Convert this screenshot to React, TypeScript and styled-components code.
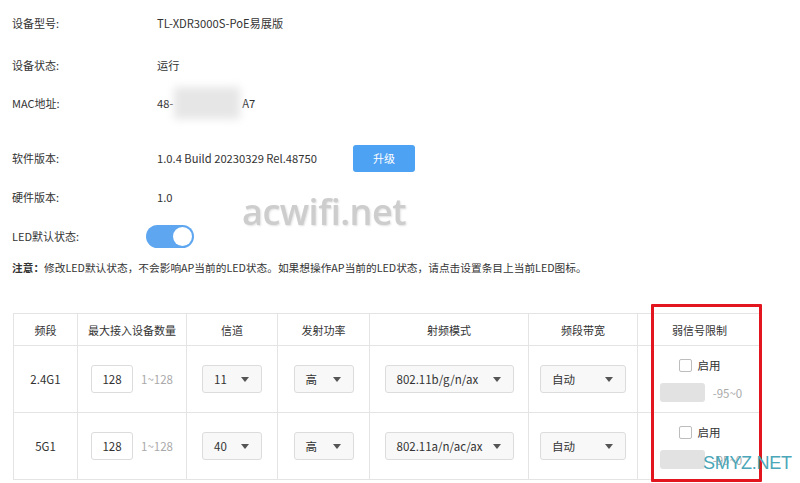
import React from 'react';
import styled, { createGlobalStyle } from 'styled-components';

const GlobalStyle = createGlobalStyle`
  html, body {
    margin: 0;
    padding: 0;
    background: #ffffff;
  }
  body {
    font-family: "Noto Sans CJK SC", "Noto Sans", "Liberation Sans", sans-serif;
    font-size: 11px;
    color: #333;
  }
`;

const Page = styled.div`
  position: relative;
  width: 800px;
  height: 483px;
  overflow: hidden;
  padding: 11px 0 0 12px;
  box-sizing: border-box;
`;

const InfoRow = styled.div<{ $gap: number }>`
  display: flex;
  align-items: center;
  height: 24px;
  margin-top: ${(p) => p.$gap}px;
`;

const Label = styled.div<{ $w?: number }>`
  width: ${(p) => p.$w ?? 145}px;
  flex-shrink: 0;
  color: #333;
  font-size: 11px;
`;

const Value = styled.div`
  color: #333;
  display: flex;
  align-items: center;
  font-size: 11.2px;
`;

const VersionText = styled.span`
  width: 196px;
  flex-shrink: 0;
`;

const Blurred = styled.span`
  display: inline-block;
  width: 66px;
  height: 32px;
  margin: 0 2px 0 1px;
  background: #e6e6e6;
  filter: blur(4px);
`;

const UpgradeButton = styled.button`
  width: 62px;
  height: 27px;
  border: none;
  border-radius: 3px;
  background: #4ea2f3;
  color: #fff;
  font-family: inherit;
  font-size: 11px;
  padding: 0;
`;

const Toggle = styled.div<{ $on: boolean }>`
  width: 48px;
  height: 23px;
  border-radius: 12px;
  background: ${(p) => (p.$on ? '#5ea6f0' : '#ccc')};
  display: flex;
  align-items: center;
  justify-content: ${(p) => (p.$on ? 'flex-end' : 'flex-start')};
  padding: 0 2px;
  box-sizing: border-box;
`;

const Knob = styled.div`
  width: 19px;
  height: 19px;
  border-radius: 50%;
  background: #fff;
`;

const Note = styled.div`
  margin-top: 12px;
  font-size: 10.7px;
  color: #333;
  white-space: nowrap;
`;

const NoteStrong = styled.span`
  font-weight: 700;
`;

const Table = styled.table`
  margin-top: 38px;
  margin-left: 1px;
  border-collapse: collapse;
  table-layout: fixed;
  width: 748px;
`;

const Col = styled.col<{ $w: number }>`
  width: ${(p) => p.$w}px;
`;

const Th = styled.th`
  height: 31px;
  border: 1px solid #e4e4e4;
  font-weight: 400;
  color: #333;
  font-size: 11px;
  text-align: center;
  padding: 0;
`;

const Td = styled.td`
  height: 66px;
  border: 1px solid #e4e4e4;
  text-align: center;
  padding: 0;
  color: #333;
  font-size: 11.5px;
`;

const CellInner = styled.div`
  display: flex;
  align-items: center;
  justify-content: center;
  gap: 8px;
`;

const NumInput = styled.div`
  width: 40px;
  height: 26px;
  border: 1px solid #dcdcdc;
  border-radius: 3px;
  display: flex;
  align-items: center;
  justify-content: center;
  color: #333;
`;

const Hint = styled.span`
  color: #aaa;
  font-size: 11.5px;
`;

const Select = styled.div<{ $w: number }>`
  width: ${(p) => p.$w}px;
  height: 26px;
  border: 1px solid #dcdcdc;
  border-radius: 3px;
  background: #f8f8f8;
  display: flex;
  align-items: center;
  justify-content: space-between;
  margin: 0 auto;
  color: #333;
`;

const SelectText = styled.span`
  padding-left: 11px;
`;

const Caret = styled.span`
  width: 0;
  height: 0;
  border-left: 4px solid transparent;
  border-right: 4px solid transparent;
  border-top: 5px solid #555;
  margin-right: 12px;
`;

const WeakCell = styled.div`
  display: flex;
  flex-direction: column;
  align-items: center;
  gap: 10px;
  padding-top: 1px;
`;

const CheckLine = styled.label`
  display: flex;
  align-items: center;
  gap: 6px;
  color: #333;
`;

const CheckBox = styled.span`
  width: 11px;
  height: 11px;
  border: 1px solid #bdbdbd;
  border-radius: 2px;
  background: #fff;
`;

const GrayInput = styled.div`
  width: 45px;
  height: 19px;
  border-radius: 3px;
  background: #e2e2e2;
`;

const WeakRange = styled.div`
  display: flex;
  align-items: center;
  gap: 8px;
  margin-left: 3px;
`;

const Highlight = styled.div`
  position: absolute;
  left: 651px;
  top: 304px;
  width: 105px;
  height: 172px;
  border: 3px solid #e3161f;
  border-radius: 1px;
  pointer-events: none;
`;

const WatermarkMain = styled.div`
  position: absolute;
  left: 242px;
  top: 187px;
  font-family: "Open Sans", "Liberation Sans", sans-serif;
  font-size: 36px;
  font-weight: 600;
  letter-spacing: -0.5px;
  color: #cdcdcd;
  text-shadow: 1px 1px 2px rgba(0, 0, 0, 0.12);
  filter: blur(0.6px);
  pointer-events: none;
`;

const WatermarkCorner = styled.div`
  position: absolute;
  left: 703px;
  top: 453px;
  font-family: "Liberation Sans", "Open Sans", sans-serif;
  font-size: 18px;
  color: #4aa6b8;
  letter-spacing: -0.3px;
  pointer-events: none;
`;

const columns = [
  { title: '频段', w: 64 },
  { title: '最大接入设备数量', w: 109 },
  { title: '信道', w: 91 },
  { title: '发射功率', w: 92 },
  { title: '射频模式', w: 159 },
  { title: '频段带宽', w: 109 },
  { title: '弱信号限制', w: 124 },
];

const bands = [
  { band: '2.4G1', max: '128', channel: '11', power: '高', mode: '802.11b/g/n/ax', width: '自动' },
  { band: '5G1', max: '128', channel: '40', power: '高', mode: '802.11a/n/ac/ax', width: '自动' },
];

const App: React.FC = () => {
  return (
    <>
      <GlobalStyle />
      <Page>
        <InfoRow $gap={0}>
          <Label>设备型号:</Label>
          <Value>TL-XDR3000S-PoE易展版</Value>
        </InfoRow>
        <InfoRow $gap={18}>
          <Label>设备状态:</Label>
          <Value>运行</Value>
        </InfoRow>
        <InfoRow $gap={14}>
          <Label>MAC地址:</Label>
          <Value>
            48-
            <Blurred />
            A7
          </Value>
        </InfoRow>
        <InfoRow $gap={31}>
          <Label>软件版本:</Label>
          <Value>
            <VersionText>1.0.4 Build 20230329 Rel.48750</VersionText>
            <UpgradeButton>升级</UpgradeButton>
          </Value>
        </InfoRow>
        <InfoRow $gap={15}>
          <Label>硬件版本:</Label>
          <Value>1.0</Value>
        </InfoRow>
        <InfoRow $gap={15}>
          <Label $w={134}>LED默认状态:</Label>
          <Toggle $on>
            <Knob />
          </Toggle>
        </InfoRow>
        <Note>
          <NoteStrong>注意：</NoteStrong>
          修改LED默认状态，不会影响AP当前的LED状态。如果想操作AP当前的LED状态，请点击设置条目上当前LED图标。
        </Note>

        <Table>
          <colgroup>
            {columns.map((c) => (
              <Col key={c.title} $w={c.w} />
            ))}
          </colgroup>
          <thead>
            <tr>
              {columns.map((c) => (
                <Th key={c.title}>{c.title}</Th>
              ))}
            </tr>
          </thead>
          <tbody>
            {bands.map((b) => (
              <tr key={b.band}>
                <Td>{b.band}</Td>
                <Td>
                  <CellInner>
                    <NumInput>{b.max}</NumInput>
                    <Hint>1~128</Hint>
                  </CellInner>
                </Td>
                <Td>
                  <Select $w={58}>
                    <SelectText>{b.channel}</SelectText>
                    <Caret />
                  </Select>
                </Td>
                <Td>
                  <Select $w={58}>
                    <SelectText>{b.power}</SelectText>
                    <Caret />
                  </Select>
                </Td>
                <Td>
                  <Select $w={127}>
                    <SelectText>{b.mode}</SelectText>
                    <Caret />
                  </Select>
                </Td>
                <Td>
                  <Select $w={84}>
                    <SelectText>{b.width}</SelectText>
                    <Caret />
                  </Select>
                </Td>
                <Td>
                  <WeakCell>
                    <CheckLine>
                      <CheckBox />
                      启用
                    </CheckLine>
                    <WeakRange>
                      <GrayInput />
                      <Hint>-95~0</Hint>
                    </WeakRange>
                  </WeakCell>
                </Td>
              </tr>
            ))}
          </tbody>
        </Table>

        <Highlight />
        <WatermarkMain>acwifi.net</WatermarkMain>
        <WatermarkCorner>SMYZ.NET</WatermarkCorner>
      </Page>
    </>
  );
};

export default App;
